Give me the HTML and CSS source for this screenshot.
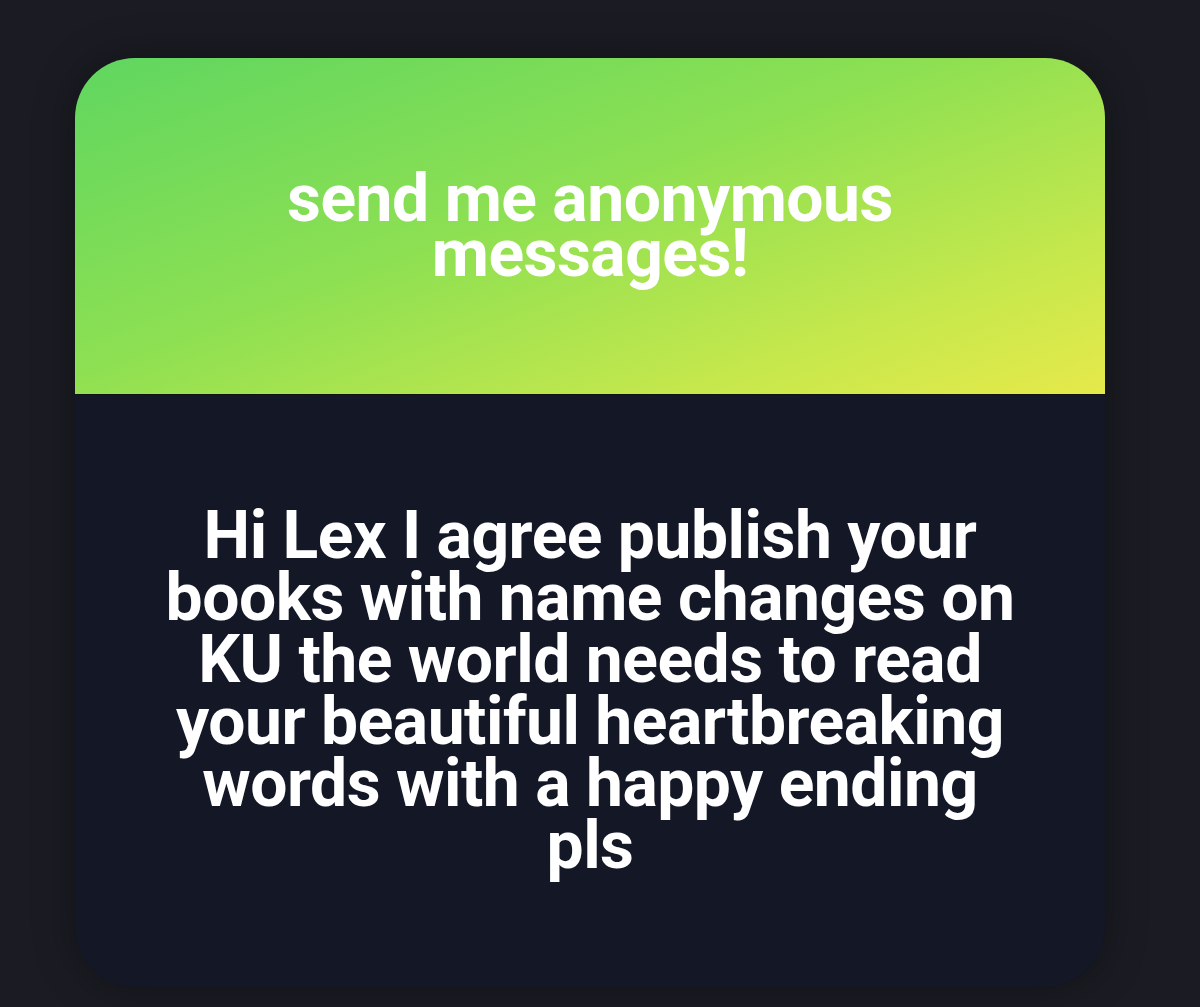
FILE: index.html
```html
<!DOCTYPE html>
<html>
<head>
	<title>anonymous messages</title>
	<link rel="stylesheet" href="styles.css">
</head>
<body>
	<div class="card">
		<div class="head">
			<p class="prompt">send me anonymous<br>messages!</p>
		</div>
		<div class="answer">
			<p class="msg">Hi Lex I agree publish your<br>books with name changes on<br>KU the world needs to read<br>your beautiful heartbreaking<br>words with a happy ending<br>pls</p>
		</div>
	</div>
</body>
</html>
```

FILE: styles.css
```css
*{
	padding: 0;
	margin: 0;
}
body{
	background: #1b1c23;
	font-family: Roboto, "Liberation Sans", sans-serif;
	height: 1007px;
	overflow: hidden;
}
.card{
	width: 1030px;
	height: 929px;
	margin-top: 58px;
	margin-left: 75px;
	border-radius: 60px;
	overflow: hidden;
	display: flex;
	flex-direction: column;
	background: #131726;
	box-shadow: 0 0 40px rgba(0, 0, 0, 0.35);
}
.head{
	height: 336px;
	display: flex;
	align-items: center;
	justify-content: center;
	background: linear-gradient(160deg, #5fd660 0%, #8ee052 45%, #c8e84c 80%, #e6e94a 100%);
	border-bottom: 1px solid #0f120e;
}
.prompt{
	color: #fff;
	font-weight: 700;
	font-size: 66px;
	line-height: 55px;
	text-align: center;
	letter-spacing: -0.5px;
}
.answer{
	flex: 1;
	display: flex;
	align-items: center;
	justify-content: center;
}
.msg{
	color: #fff;
	font-weight: 700;
	font-size: 66px;
	line-height: 62px;
	text-align: center;
	letter-spacing: -0.5px;
}
```
